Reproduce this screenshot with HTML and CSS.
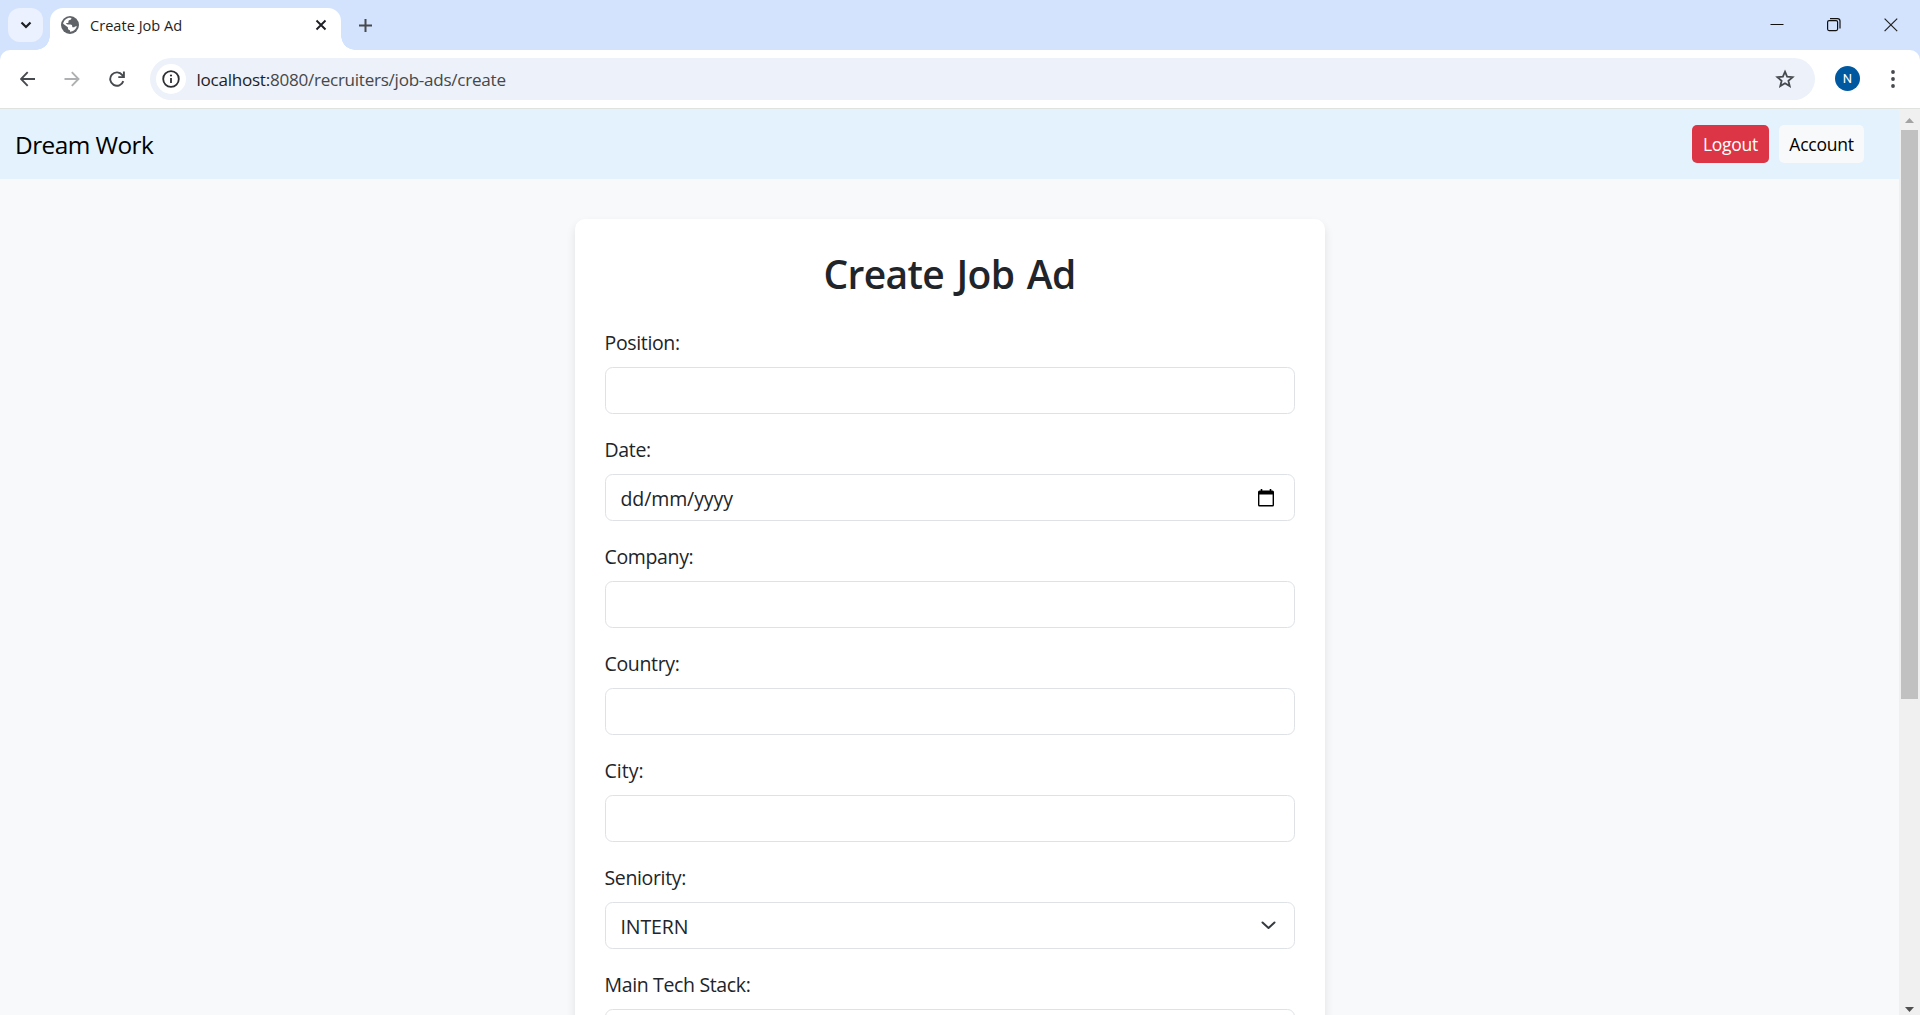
FILE: index.html
```html
<!DOCTYPE html>
<html lang="en">
<head>
<meta charset="utf-8">
<title>Create Job Ad</title>
<link rel="stylesheet" href="styles.css">
</head>
<body>
<div class="tabstrip">
  <div class="tab-search"><svg width="12" height="8" viewBox="0 0 12 8"><path d="M1.500 1.500 6 6 10.500 1.500" fill="none" stroke="#1d1f23" stroke-width="2.200"/></svg></div>
  <div class="tab">
    <svg class="globe" width="18" height="18" viewBox="0 0 18 18"><circle cx="9" cy="9" r="9" fill="#5f6368"/><path d="M10.500 1.900c-.2 1.200-.6 1.900-1.700 2.100-1.300.2-1.500 1-1.300 1.900.1.700-.4 1.100-1.200 1.100H5.200c0 1 .5 1.400 1.500 1.400h2.600c1.500 0 1.900.7 1.900 1.800 0 .9.300 1.100 1.200 1.100.7 0 1.100-.3 1.500-.9l2-.1c-.9 2.900-3.600 5.300-6.900 5.500v-1.600c-1.400 0-2.100-.7-2.100-2.100v-.8L2.100 7.700C2.700 4.300 5.700 1.700 9 1.700z" fill="#fff"/><path d="M10.900 2.200v1.500c0 1-.6 1.500-1.500 1.500 0 1.500-.7 2-1.900 2l3.100.2c1.200.1 1.800.9 1.900 2 1 .1 1.800-.2 2.900-.9l.9.600c.2-3.300-2.300-6.500-5.400-6.900z" fill="#5f6368"/></svg>
    <span class="tab-title">Create Job Ad</span>
    <svg class="tab-close" width="12" height="12" viewBox="0 0 12 12"><path d="M1.500 1.500l9 9M10.500 1.500l-9 9" stroke="#1d1f23" stroke-width="1.900"/></svg>
  </div>
  <svg class="new-tab" width="13" height="13" viewBox="0 0 13 13"><path d="M6.500 0v13M0 6.500h13" stroke="#46494d" stroke-width="2"/></svg>
  <div class="window-buttons">
    <svg width="14" height="14" viewBox="0 0 14 14"><path d="M.5 6.500h13" stroke="#111" stroke-width="1"/></svg>
    <svg width="14" height="14" viewBox="0 0 14 14"><rect x=".6" y="2.600" width="10" height="10" rx="1.500" fill="none" stroke="#111" stroke-width="1.200"/><path d="M3 .6h7.500q2.500 0 2.500 2.500v7.500" fill="none" stroke="#111" stroke-width="1.200"/></svg>
    <svg width="14" height="14" viewBox="0 0 14 14"><path d="M.6.600l12.600 12.600M13.200.600L.6 13.200" stroke="#222" stroke-width="1.200"/></svg>
  </div>
</div>
<div class="toolbar">
  <svg class="nav back" width="16" height="16" viewBox="0 0 16 16"><path d="M15 8H1.500M7.700 1.200L1 8l6.700 6.800" fill="none" stroke="#46494d" stroke-width="1.900"/></svg>
  <svg class="nav forward" width="16" height="16" viewBox="0 0 16 16"><path d="M.5 8H14M7.800 1.200L14.500 8l-6.700 6.800" fill="none" stroke="#aeb0b2" stroke-width="1.900"/></svg>
  <svg class="nav reload" width="16" height="16" viewBox="0 0 16 16"><path d="M14.300 10.100A6.700 6.700 0 1 1 13.300 4.100L14.500 5.700" fill="none" stroke="#46494d" stroke-width="1.900"/><path d="M14.900.6v5.500H9.300" fill="none" stroke="#46494d" stroke-width="1.900"/></svg>
  <div class="omnibox">
    <div class="site-info"><svg width="18" height="18" viewBox="0 0 18 18"><circle cx="9" cy="9" r="7.800" fill="none" stroke="#2d2f33" stroke-width="1.800"/><path d="M9 8v5" stroke="#2d2f33" stroke-width="1.800"/><circle cx="9" cy="5.500" r="1.100" fill="#2d2f33"/></svg></div>
    <span class="url"><span class="host">localhost:</span>8080/recruiters/job-ads/create</span>
    <svg class="star" width="20" height="20" viewBox="0 0 20 20"><path d="M10 2.700l2.100 5 5.500.5-4.200 3.600 1.300 5.300-4.700-2.900-4.700 2.900 1.300-5.300L2.400 8.200l5.500-.5z" fill="none" stroke="#46494d" stroke-width="1.800"/></svg>
  </div>
  <div class="avatar">N</div>
  <svg class="menu-dots" width="4" height="18" viewBox="0 0 4 18"><g fill="#46494d"><circle cx="2" cy="2" r="1.900"/><circle cx="2" cy="9" r="1.900"/><circle cx="2" cy="16" r="1.900"/></g></svg>
</div>
<div class="viewport">
  <div class="page">
    <nav class="navbar">
      <a class="brand">Dream Work</a>
      <div class="actions"><a class="btn danger">Logout</a><a class="btn light">Account</a></div>
    </nav>
    <form class="card">
      <h2>Create Job Ad</h2>
      <label>Position:</label><input class="control">
      <label>Date:</label>
      <div class="control"><span class="placeholder">dd/mm/yyyy</span><svg class="calendar" width="16" height="18" viewBox="0 0 16 18"><path d="M3.500 0v3M12.500 0v3" stroke="#000" stroke-width="1.600"/><path d="M1.500 1.500h13q1.500 0 1.500 1.500v13q0 1.500-1.500 1.500h-13Q0 17.500 0 16V3q0-1.500 1.500-1.500zM1.400 5.500V16h13.200V5.500z" fill="#000" fill-rule="evenodd"/></svg></div>
      <label>Company:</label><input class="control">
      <label>Country:</label><input class="control">
      <label class="short">City:</label><input class="control">
      <label>Seniority:</label>
      <div class="control"><span class="value">INTERN</span><svg class="chevron" width="15" height="9" viewBox="0 0 15 9"><path d="M1.500 1.500l6 5.500 6-5.500" fill="none" stroke="#343a40" stroke-width="2" stroke-linecap="round" stroke-linejoin="round"/></svg></div>
      <label>Main Tech Stack:</label><input class="control">
    </form>
  </div>
  <div class="scrollbar">
    <svg width="9" height="5" viewBox="0 0 9 5"><path d="M4.500 0L9 5H0z" fill="#a3a3a3"/></svg>
    <div class="thumb"></div>
    <svg class="down" width="9" height="5" viewBox="0 0 9 5"><path d="M0 0h9L4.500 5z" fill="#505050"/></svg>
  </div>
</div>
</body>
</html>
```
FILE: styles.css
```css
* { box-sizing: border-box; }
body { margin: 0; width: 1920px; height: 1015px; overflow: hidden; display: flex; flex-direction: column; background: #d3e3fd; font-family: "Open Sans", "Noto Sans", sans-serif; font-size: 19.5px; color: #212529; }
svg { display: block; flex: none; }
.tabstrip { height: 50px; display: flex; align-items: center; padding: 0 22px 0 8px; flex: none; }
.tab-search { width: 35px; height: 34px; border-radius: 12px; background: #ebf1fe; display: flex; align-items: center; justify-content: center; }
.tab { position: relative; align-self: flex-end; width: 291px; height: 42.5px; margin-left: 7px; background: #fff; border-radius: 13px 13px 0 0; display: flex; align-items: center; padding: 0 14px 8px 11px; }
.tab::before, .tab::after { content: ""; position: absolute; bottom: 0; width: 14px; height: 14px; }
.tab::before { left: -14px; background: radial-gradient(circle at 0 0, transparent 13.5px, #fff 14px); }
.tab::after { right: -14px; background: radial-gradient(circle at 100% 0, transparent 13.5px, #fff 14px); }
.tab-title { flex: 1; margin-left: 11px; font-size: 14.6px; color: #1f1f1f; white-space: nowrap; }
.new-tab { margin-left: 18px; }
.window-buttons { margin-left: auto; display: flex; gap: 43px; }
.toolbar { height: 59px; flex: none; display: flex; align-items: center; background: #fff; border-radius: 10px 10px 0 0; border-bottom: 1px solid #dfe2dd; padding: 0 25.5px 0 20px; }
.nav { margin-bottom: 1px; }
.forward { margin-left: 28px; }
.reload { margin-left: 29px; }
.omnibox { width: 1665px; height: 42px; margin-left: 25px; border-radius: 21px; background: #ecf1fa; display: flex; align-items: center; padding: 0 20px 0 6px; }
.site-info { width: 30px; height: 30px; border-radius: 50%; background: #fff; display: flex; align-items: center; justify-content: center; }
.url { flex: 1; margin-left: 10.5px; padding-top: 1px; font-size: 17.1px; letter-spacing: -.27px; color: #474747; white-space: nowrap; }
.host { color: #1f1f1f; }
.avatar { width: 25px; height: 25px; margin: 0 0 1px 20px; border-radius: 50%; background: #0058a0; color: #fff; font: 13px/25px Roboto, sans-serif; text-align: center; }
.menu-dots { margin-left: auto; }
.viewport { flex: 1; min-height: 0; display: flex; }
.page { width: 1899px; overflow: hidden; background: #f8f9fb; }
.navbar { height: 70px; background: #e3f2fd; display: flex; align-items: center; justify-content: space-between; padding: 0 35px 0 15px; }
.brand { font-size: 24.4px; letter-spacing: -.55px; color: #000; }
.actions { display: flex; gap: 10px; }
.btn { height: 38px; border-radius: 5px; font-size: 17.5px; letter-spacing: -.25px; line-height: 39px; text-align: center; }
.danger { width: 77px; background: #dc3545; color: #fff; }
.light { width: 85px; background: #f8f9fa; color: #000; }
.card { width: 750px; height: 1300px; margin: 40px auto 0; padding: 30px; background: #fff; border-radius: 10px; box-shadow: 0 5px 10px rgba(0, 0, 0, .1); }
h2 { margin: 0 0 30px; padding-top: 1px; height: 48px; font-size: 39px; line-height: 48px; font-weight: 600; letter-spacing: -.65px; word-spacing: 3px; text-align: center; }
label { display: block; height: 30px; line-height: 32px; margin-bottom: 10px; letter-spacing: -.35px; }
.short { letter-spacing: 0; }
.placeholder, .value { letter-spacing: -.1px; }
.control { width: 100%; height: 47px; margin: 0 0 20px; padding: 2px 17.5px 0 15px; border: 1px solid #dee2e6; border-radius: 7.5px; background: #fff; display: flex; align-items: center; justify-content: space-between; }
.calendar { margin: 0 2.5px 2px 0; }
.chevron { margin-bottom: 2px; }
.scrollbar { width: 21px; background: #f0f0f0; display: flex; flex-direction: column; align-items: center; padding: 9px 0 3px; }
.thumb { width: 17px; height: 569px; margin-top: 7px; background: #c1c1c1; }
.down { margin-top: auto; }
```
